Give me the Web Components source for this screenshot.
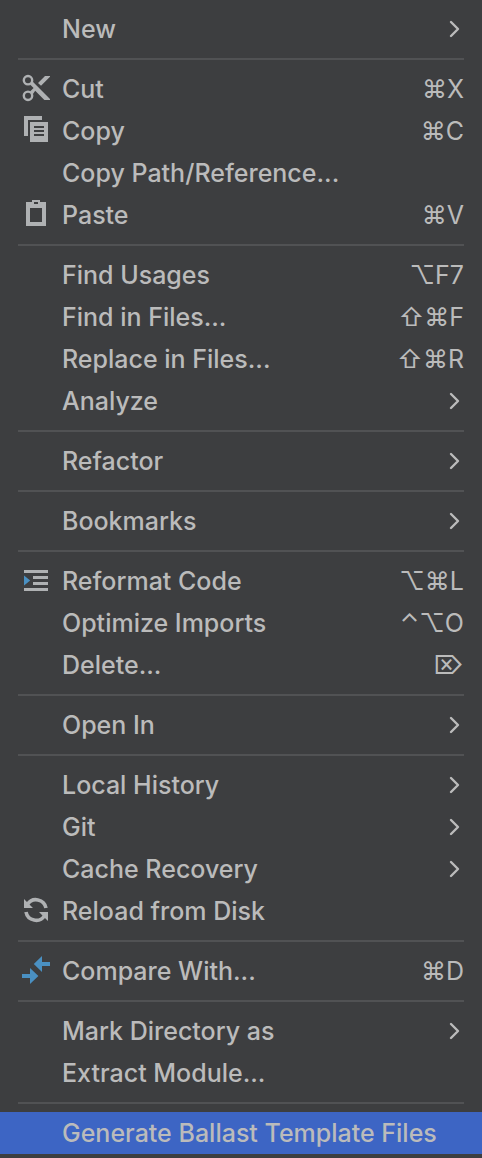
<!DOCTYPE html>
<html lang="en">
<head>
<meta charset="utf-8">
<title>Context menu</title>
<style>
  html { background: #3d3e40; }
  body { margin: 0; }
</style>
</head>
<body>
<context-menu>
  <menu-entry submenu>New</menu-entry>
  <menu-divider></menu-divider>
  <menu-entry icon="cut" keys="⌘X">Cut</menu-entry>
  <menu-entry icon="copy" keys="⌘C">Copy</menu-entry>
  <menu-entry>Copy Path/Reference...</menu-entry>
  <menu-entry icon="paste" keys="⌘V">Paste</menu-entry>
  <menu-divider></menu-divider>
  <menu-entry keys="⌥F7">Find Usages</menu-entry>
  <menu-entry keys="⇧⌘F">Find in Files...</menu-entry>
  <menu-entry keys="⇧⌘R">Replace in Files...</menu-entry>
  <menu-entry submenu>Analyze</menu-entry>
  <menu-divider></menu-divider>
  <menu-entry submenu>Refactor</menu-entry>
  <menu-divider></menu-divider>
  <menu-entry submenu>Bookmarks</menu-entry>
  <menu-divider></menu-divider>
  <menu-entry icon="reformat" keys="⌥⌘L">Reformat Code</menu-entry>
  <menu-entry keys="⌃⌥O">Optimize Imports</menu-entry>
  <menu-entry keys="⌦">Delete...</menu-entry>
  <menu-divider></menu-divider>
  <menu-entry submenu>Open In</menu-entry>
  <menu-divider></menu-divider>
  <menu-entry submenu>Local History</menu-entry>
  <menu-entry submenu>Git</menu-entry>
  <menu-entry submenu>Cache Recovery</menu-entry>
  <menu-entry icon="reload">Reload from Disk</menu-entry>
  <menu-divider></menu-divider>
  <menu-entry icon="compare" keys="⌘D">Compare With...</menu-entry>
  <menu-divider></menu-divider>
  <menu-entry submenu>Mark Directory as</menu-entry>
  <menu-entry>Extract Module...</menu-entry>
  <menu-divider></menu-divider>
  <menu-entry selected>Generate Ballast Template Files</menu-entry>
</context-menu>

<script>
const ICONS = {
  cut: `<g fill="none" stroke="#afb1b3" stroke-width="1.2"><circle cx="4" cy="4.1" r="2.1"/><circle cx="4" cy="11.9" r="2.1"/></g>
    <path fill="#afb1b3" d="M5 6.2 6.3 4.7 15 13.5V14H12.2L7.6 9.4 6.3 11.3 5 9.8 6.8 8ZM12.5 2H15V2.4L10.5 6.9 9 5.5Z"/>`,
  copy: `<path fill="#afb1b3" fill-rule="evenodd" d="M2 1h9v2H4v8H2zM5 4h9v10H5zM7 6v1h5V6zM7 8v1h5V8zM7 10v1h5v-1z"/>`,
  paste: `<path fill="#afb1b3" fill-rule="evenodd" d="M3 2h3V1h4v1h3v12H3zM7 2v1h2V2zM5 5v7h6V5z"/>`,
  reformat: `<path fill="#afb1b3" d="M2 3h12v1.5H2zM6.5 6H14v1.5H6.5zM6.5 9H14v1.5H6.5zM2 12h12v1.5H2z"/>
    <path fill="#4a90c2" d="M2 5.8 5.1 8.2 2 10.7z"/>`,
  reload: `<g fill="none" stroke="#afb1b3" stroke-width="1.8"><path d="M3.7 5.2A5.1 5.1 0 0 1 13 7"/><path d="M12.3 10.8A5.1 5.1 0 0 1 3 9"/></g>
    <path fill="#afb1b3" d="M2 2.5 6.5 7H2zM14 13.5 9.5 9H14z"/>`,
  compare: `<path fill="#4a90c2" d="M6.9 5 11 1v3h4v2h-4v3zM1 10h4V7l4.2 4L5 15v-3H1z"/>`
};

const entryTemplate = document.createElement('template');
entryTemplate.innerHTML = `
  <style>
    :host { display: block; }
    button {
      display: flex; align-items: center; box-sizing: border-box;
      width: 100%; margin: 0; padding: 4px 18px 4px 20px; border: 0;
      background: none; color: inherit; font: inherit; text-align: left;
    }
    :host([selected]) button { background: #3d65c4; }
    .icon { flex: none; align-self: flex-start; width: 32px; height: 32px; margin-right: 10px; }
    .icon svg { display: block; width: 100%; height: 100%; }
    .label { flex: 1; white-space: nowrap; }
    .keys { font-weight: 400; white-space: nowrap; }
    .arrow { display: block; width: 16px; height: 20px; }
  </style>
  <button type="button" role="menuitem">
    <span class="icon"></span>
    <span class="label"><slot></slot></span>
  </button>`;

customElements.define('menu-entry', class extends HTMLElement {
  constructor() {
    super();
    const root = this.attachShadow({ mode: 'open' });
    root.append(entryTemplate.content.cloneNode(true));
    const button = root.querySelector('button');
    const icon = ICONS[this.getAttribute('icon')];
    if (icon) {
      root.querySelector('.icon').innerHTML = `<svg viewBox="0 0 16 16" aria-hidden="true">${icon}</svg>`;
    }
    if (this.hasAttribute('keys')) {
      const keys = document.createElement('span');
      keys.className = 'keys';
      keys.textContent = this.getAttribute('keys');
      button.append(keys);
    }
    if (this.hasAttribute('submenu')) {
      button.setAttribute('aria-haspopup', 'menu');
      button.insertAdjacentHTML('beforeend',
        `<svg class="arrow" viewBox="0 0 16 20" aria-hidden="true"><path d="M3 3l7 7-7 7" fill="none" stroke="#bbb" stroke-width="2.4" stroke-linecap="round" stroke-linejoin="round"/></svg>`);
    }
  }
});

customElements.define('menu-divider', class extends HTMLElement {
  constructor() {
    super();
    this.attachShadow({ mode: 'open' }).innerHTML = `
      <style>
        :host { display: block; padding: 8px 18px; }
        hr { height: 2px; margin: 0; border: 0; background: #515254; }
      </style>
      <hr>`;
  }
});

customElements.define('context-menu', class extends HTMLElement {
  constructor() {
    super();
    this.attachShadow({ mode: 'open' }).innerHTML = `
      <style>
        :host {
          display: block; padding: 8px 0 4px;
          background: #3d3e40; color: #bbb;
          font: 500 25px/34px Inter, "Liberation Sans", sans-serif;
        }
      </style>
      <div role="menu"><slot></slot></div>`;
  }
});
</script>
</body>
</html>
